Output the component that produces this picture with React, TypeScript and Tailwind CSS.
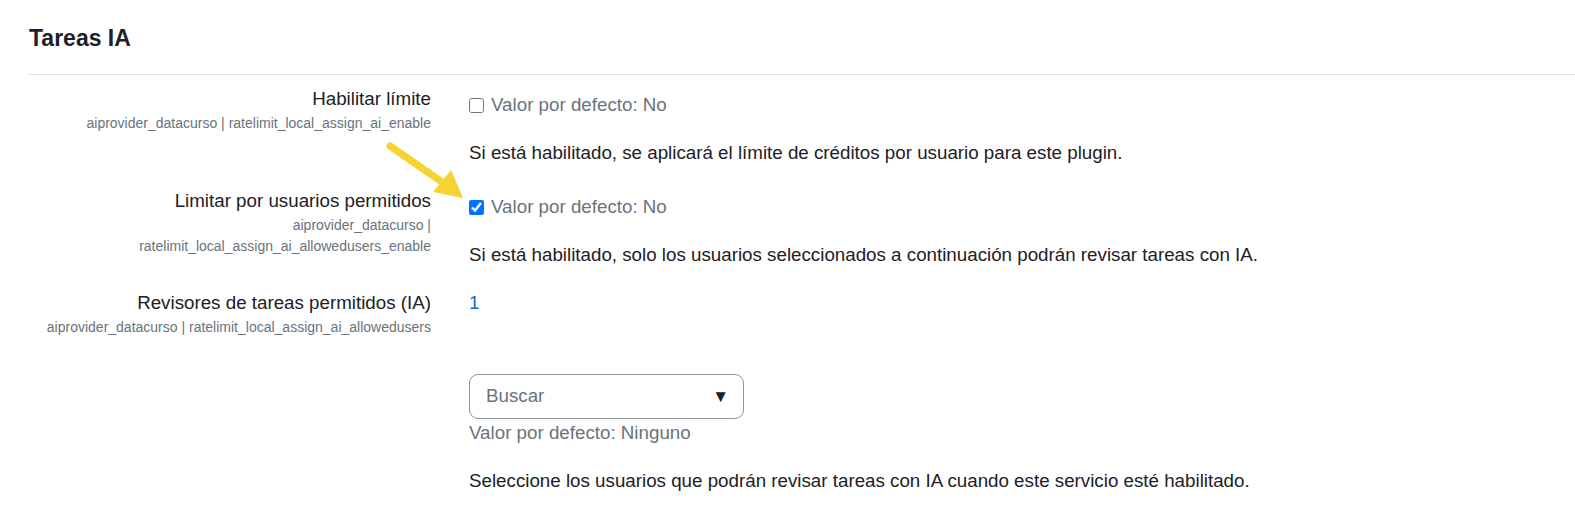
import React from 'react'

function Arrow() {
  return (
    <svg
      className="pointer-events-none absolute left-[384px] top-[140px]"
      width="84"
      height="64"
      viewBox="0 0 84 64"
    >
      <line x1="6" y1="6" x2="58" y2="42" stroke="#f6d330" strokeWidth="7" strokeLinecap="round" />
      <polygon points="79,58 49,52 67,30" fill="#f6d330" />
    </svg>
  )
}

function Label({ title, name }: { title: string; name: React.ReactNode }) {
  return (
    <div className="flex w-[400px] shrink-0 flex-col items-end text-right">
      <div className="text-[18.75px] leading-[28px] text-[#1d2125]">{title}</div>
      <div className="text-[14px] leading-[21px] text-[#6a737b]">{name}</div>
    </div>
  )
}

function CheckRow({
  title,
  name,
  checked,
  description,
}: {
  title: string
  name: React.ReactNode
  checked: boolean
  description: string
}) {
  return (
    <div className="flex gap-[38px]">
      <Label title={title} name={name} />
      <div className="flex flex-col pt-[6px]">
        <label className="flex items-center gap-[7px] text-[18.75px] leading-[28px] text-[#6a737b]">
          <input
            type="checkbox"
            defaultChecked={checked}
            className="m-0 h-[15px] w-[15px] accent-[#0075ff]"
          />
          Valor por defecto: No
        </label>
        <p className="mt-5 text-[18.75px] leading-[28px] text-[#1d2125]">{description}</p>
      </div>
    </div>
  )
}

export default function App() {
  return (
    <div
      className="relative min-h-[513px] bg-white px-[29px] pt-6"
      style={{ fontFamily: '"Liberation Sans", Arial, sans-serif' }}
    >
      <h2 className="text-[23px] font-bold leading-[28px] text-[#1d2125]">Tareas IA</h2>
      <div className="mt-[22px] mr-[-29px] border-t border-[#dee2e6]" />

      <div className="mt-[10px] ml-[2px] flex flex-col gap-5">
        <CheckRow
          title="Habilitar límite"
          name="aiprovider_datacurso | ratelimit_local_assign_ai_enable"
          checked={false}
          description="Si está habilitado, se aplicará el límite de créditos por usuario para este plugin."
        />
        <CheckRow
          title="Limitar por usuarios permitidos"
          name={
            <>
              aiprovider_datacurso |
              <br />
              ratelimit_local_assign_ai_allowedusers_enable
            </>
          }
          checked={true}
          description="Si está habilitado, solo los usuarios seleccionados a continuación podrán revisar tareas con IA."
        />

        <div className="flex gap-[38px]">
          <Label
            title="Revisores de tareas permitidos (IA)"
            name="aiprovider_datacurso | ratelimit_local_assign_ai_allowedusers"
          />
          <div className="flex flex-col">
            <a className="text-[18.75px] leading-[28px] text-[#0f6cbf]">1</a>
            <button
              type="button"
              className="mt-[57px] flex h-[45px] w-[275px] items-center justify-between rounded-[9px] border border-[#8f959e] bg-white pl-4 pr-[14px] text-[18.75px] text-[#6a737b]"
            >
              <span>Buscar</span>
              <span className="text-[17px] text-[#1d2125]">▼</span>
            </button>
            <div className="text-[18.75px] leading-[28px] text-[#6a737b]">Valor por defecto: Ninguno</div>
            <p className="mt-5 text-[18.75px] leading-[28px] text-[#1d2125]">
              Seleccione los usuarios que podrán revisar tareas con IA cuando este servicio esté habilitado.
            </p>
          </div>
        </div>
      </div>

      <Arrow />
    </div>
  )
}
